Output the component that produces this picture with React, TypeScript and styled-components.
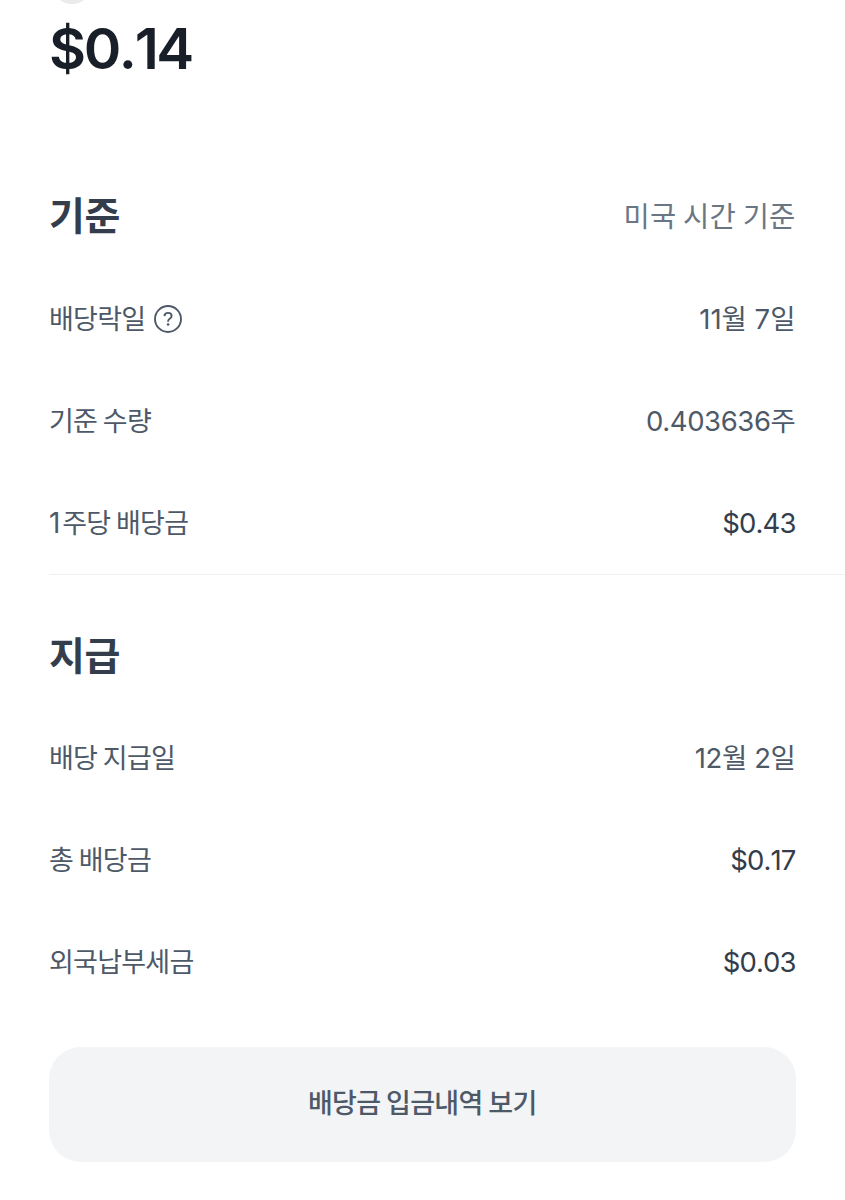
import React from 'react';
import styled, { createGlobalStyle } from 'styled-components';

const Global = createGlobalStyle`
  * { box-sizing: border-box; }
  body { margin: 0; background: #fff; overflow: hidden; }
`;
const Page = styled.main`
  position: relative;
  width: 845px;
  height: 1200px;
  padding: 0 49.5px 0 49px;
  overflow: hidden;
  background: #fff;
  font-family: Inter, "Noto Sans CJK KR", sans-serif;
  color: #4e5968;
`;
const Dot = styled.div`
  position: absolute;
  top: -36px;
  left: 52px;
  width: 40px;
  height: 40px;
  border-radius: 50%;
  background: #ebebed;
`;
const Amount = styled.h1`
  margin: 0;
  padding-top: 14px;
  height: 164px;
  font-size: 57px;
  line-height: 70px;
  font-weight: 600;
  font-kerning: none;
  letter-spacing: -2.4px;
  color: #191f28;
`;
const Header = styled.div<{ $spaced?: boolean }>`
  display: flex;
  justify-content: space-between;
  align-items: center;
  height: ${p => (p.$spaced ? 103 : 104)}px;
  margin-top: ${p => (p.$spaced ? 29 : 0)}px;
`;
const Title = styled.h2`
  margin: 0;
  font-size: 39px;
  font-weight: 700;
  line-height: 50px;
  letter-spacing: -0.5px;
  color: #333d4b;
`;
const Note = styled.span`
  padding-top: 1px;
  font-size: 28.5px;
  line-height: 40px;
  letter-spacing: 0.2px;
  word-spacing: -1.5px;
  color: #6b7684;
`;
const Row = styled.div`
  display: flex;
  justify-content: space-between;
  align-items: center;
  height: 102px;
  line-height: 40px;
`;
const Label = styled.span`
  display: flex;
  align-items: center;
  gap: 9px;
  padding-top: 1px;
  font-size: 27px;
  letter-spacing: -0.75px;
  word-spacing: -1.2px;
`;
const HelpIcon = styled.svg`
  width: 28px;
  height: 28px;
  margin-bottom: 2px;
`;
const Count = styled.span`
  font-size: 28px;
  margin-right: 2.5px;
`;
const Value = styled.span<{ $dark?: boolean; $track?: number }>`
  padding-bottom: 1px;
  font-size: 27.5px;
  font-kerning: ${p => (p.$dark ? 'none' : 'normal')};
  letter-spacing: ${p => p.$track ?? -0.4}px;
  color: ${p => (p.$dark ? '#333d4b' : '#4e5968')};
`;
const Divider = styled.hr`
  margin: 0 -50px 0 0;
  height: 1px;
  border: 0;
  background: #f0f1f3;
`;
const Button = styled.button`
  display: block;
  width: 100%;
  height: 114.5px;
  margin-top: 34px;
  padding: 0;
  border: 0;
  border-radius: 32px;
  background: #f2f4f6;
  font: 500 27px/40px Inter, "Noto Sans CJK KR", sans-serif;
  letter-spacing: -0.7px;
  word-spacing: -0.8px;
  color: #4e5968;
`;

export default function App() {
  return (
    <Page>
      <Global />
      <Dot />
      <Amount>$0.14</Amount>
      <Header><Title>기준</Title><Note>미국 시간 기준</Note></Header>
      <Row>
        <Label>배당락일
          <HelpIcon viewBox="0 0 28 28" fill="none" stroke="#4e5968" strokeWidth="1.9">
            <circle cx="14" cy="14" r="13" />
            <path d="M10.4 11.1C10.6 9 12 7.9 14.1 7.9c2.1 0 3.5 1.2 3.5 3 0 1.5-.8 2.2-1.9 2.9-1.2.8-1.6 1.3-1.6 2.7v.3" />
            <circle cx="14.1" cy="19.5" r="1.3" fill="#4e5968" stroke="none" />
          </HelpIcon>
        </Label>
        <Value $track={0}>11월 7일</Value>
      </Row>
      <Row><Label>기준 수량</Label><Value>0.403636주</Value></Row>
      <Row><Label><span><Count>1</Count>주당 배당금</span></Label><Value $dark $track={-0.9}>$0.43</Value></Row>
      <Divider />
      <Header $spaced><Title>지급</Title></Header>
      <Row><Label>배당 지급일</Label><Value>12월 2일</Value></Row>
      <Row><Label>총 배당금</Label><Value $dark $track={-0.9}>$0.17</Value></Row>
      <Row><Label>외국납부세금</Label><Value $dark $track={-0.9}>$0.03</Value></Row>
      <Button>배당금 입금내역 보기</Button>
    </Page>
  );
}
